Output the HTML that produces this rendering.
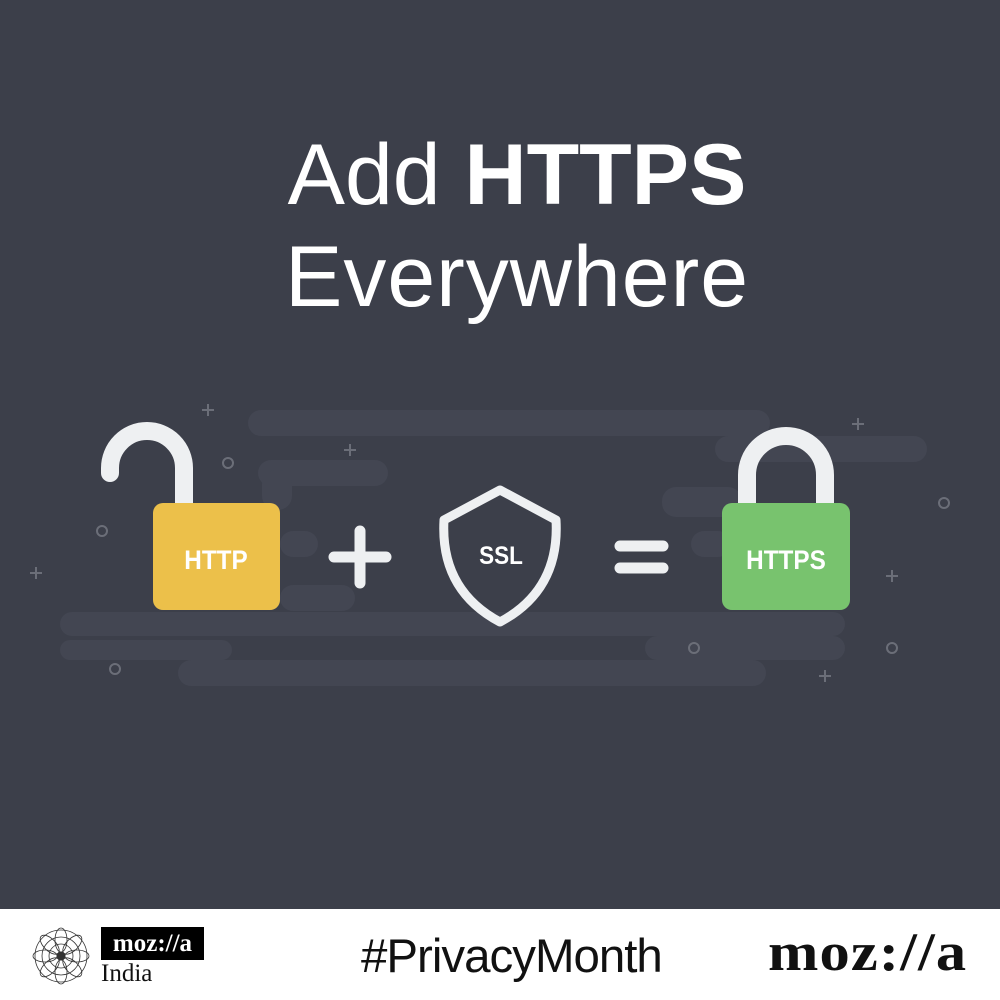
<!DOCTYPE html>
<html><head><style>
html,body{margin:0;padding:0;}
body{width:1000px;height:1000px;background:#3c3f4a;position:relative;overflow:hidden;font-family:"Liberation Sans",sans-serif;}
.t{position:absolute;left:0;width:1034px;text-align:center;color:#fff;font-size:86px;}
.s{position:absolute;background:#434652;border-radius:14px;height:26px;}
.f{position:absolute;left:0;top:909px;width:1000px;height:91px;background:#fff;}
</style></head><body>
<div class="t" style="top:126px">Add <b>HTTPS</b></div>
<div class="t" style="top:228px;letter-spacing:1px">Everywhere</div>

<div class="s" style="left:248px;top:410px;width:522px"></div>
<div class="s" style="left:258px;top:460px;width:130px"></div>
<div class="s" style="left:262px;top:470px;width:30px;height:40px"></div>
<div class="s" style="left:715px;top:436px;width:212px"></div>
<div class="s" style="left:662px;top:487px;width:80px;height:30px"></div>
<div class="s" style="left:280px;top:531px;width:38px"></div>
<div class="s" style="left:691px;top:531px;width:40px"></div>
<div class="s" style="left:280px;top:585px;width:75px"></div>
<div class="s" style="left:60px;top:612px;width:785px;height:24px"></div>
<div class="s" style="left:60px;top:640px;width:172px;height:20px"></div>
<div class="s" style="left:645px;top:636px;width:200px;height:24px"></div>
<div class="s" style="left:178px;top:660px;width:588px;height:26px"></div>

<svg width="1000" height="1000" style="position:absolute;left:0;top:0">
<g stroke="#6b6e78" stroke-width="2" fill="none">
<path d="M208 404v12M202 410h12M350 444v12M344 450h12M36 567v12M30 573h12M858 418v12M852 424h12M892 570v12M886 576h12M825 670v12M819 676h12"/>
<circle cx="228" cy="463" r="5"/><circle cx="102" cy="531" r="5"/><circle cx="115" cy="669" r="5"/><circle cx="944" cy="503" r="5"/><circle cx="694" cy="648" r="5"/><circle cx="892" cy="648" r="5"/>
</g>
<path d="M110 473 V468 A37 37 0 0 1 184 468 V505" stroke="#eef0f2" stroke-width="18" fill="none" stroke-linecap="round"/>
<rect x="153" y="503" width="127" height="107" rx="10" fill="#ecc04a"/>
<text x="216" y="569" text-anchor="middle" fill="#fff" font-size="27" font-weight="bold" font-family="Liberation Sans" transform="translate(216 0) scale(0.9 1) translate(-216 0)">HTTP</text>
<path d="M334 557h52M360 531v52" stroke="#eef0f2" stroke-width="11" stroke-linecap="round"/>
<path d="M500 490 L556 520 Q560 590 500 622 Q440 590 444 520 Z" stroke="#eef0f2" stroke-width="9" fill="none" stroke-linejoin="round"/>
<text x="501" y="564" text-anchor="middle" fill="#fff" font-size="25" font-weight="bold" font-family="Liberation Sans" transform="translate(501 0) scale(0.9 1) translate(-501 0)">SSL</text>
<path d="M620 546h43M620 568h43" stroke="#eef0f2" stroke-width="11" stroke-linecap="round"/>
<path d="M747 505 V475 A39 39 0 0 1 825 475 V505" stroke="#eef0f2" stroke-width="18" fill="none"/>
<rect x="722" y="503" width="128" height="107" rx="10" fill="#78c36e"/>
<text x="786" y="569" text-anchor="middle" fill="#fff" font-size="27" font-weight="bold" font-family="Liberation Sans" transform="translate(786 0) scale(0.9 1) translate(-786 0)">HTTPS</text>
</svg>

<div class="f">
<svg width="60" height="60" style="position:absolute;left:31px;top:17px" fill="none" stroke="#333" stroke-width="0.8">
<circle cx="30" cy="30" r="26"/><circle cx="30" cy="30" r="19"/><circle cx="30" cy="30" r="12"/><circle cx="30" cy="30" r="4" fill="#333"/>
<g><ellipse cx="30" cy="14" rx="6" ry="12"/><ellipse cx="30" cy="14" rx="6" ry="12" transform="rotate(45 30 30)"/><ellipse cx="30" cy="14" rx="6" ry="12" transform="rotate(90 30 30)"/><ellipse cx="30" cy="14" rx="6" ry="12" transform="rotate(135 30 30)"/><ellipse cx="30" cy="14" rx="6" ry="12" transform="rotate(180 30 30)"/><ellipse cx="30" cy="14" rx="6" ry="12" transform="rotate(225 30 30)"/><ellipse cx="30" cy="14" rx="6" ry="12" transform="rotate(270 30 30)"/><ellipse cx="30" cy="14" rx="6" ry="12" transform="rotate(315 30 30)"/></g>
</svg>
<div style="position:absolute;left:101px;top:18px;width:103px;height:33px;background:#000;color:#fff;font-family:'Liberation Serif',serif;font-weight:900;font-size:25px;line-height:33px;text-align:center">moz://a</div>
<div style="position:absolute;left:101px;top:51px;font-family:'Liberation Serif',serif;font-size:25px;color:#111">India</div>
<div style="position:absolute;left:361px;top:19px;font-size:47px;color:#111;letter-spacing:-1px;transform:scaleX(1.01);transform-origin:left">#PrivacyMonth</div>
<div style="position:absolute;left:768px;top:12px;font-family:'Liberation Serif',serif;font-weight:bold;font-size:54px;color:#111;letter-spacing:1px;transform:scaleX(1.12);transform-origin:left">moz://a</div>
</div>
</body></html>
